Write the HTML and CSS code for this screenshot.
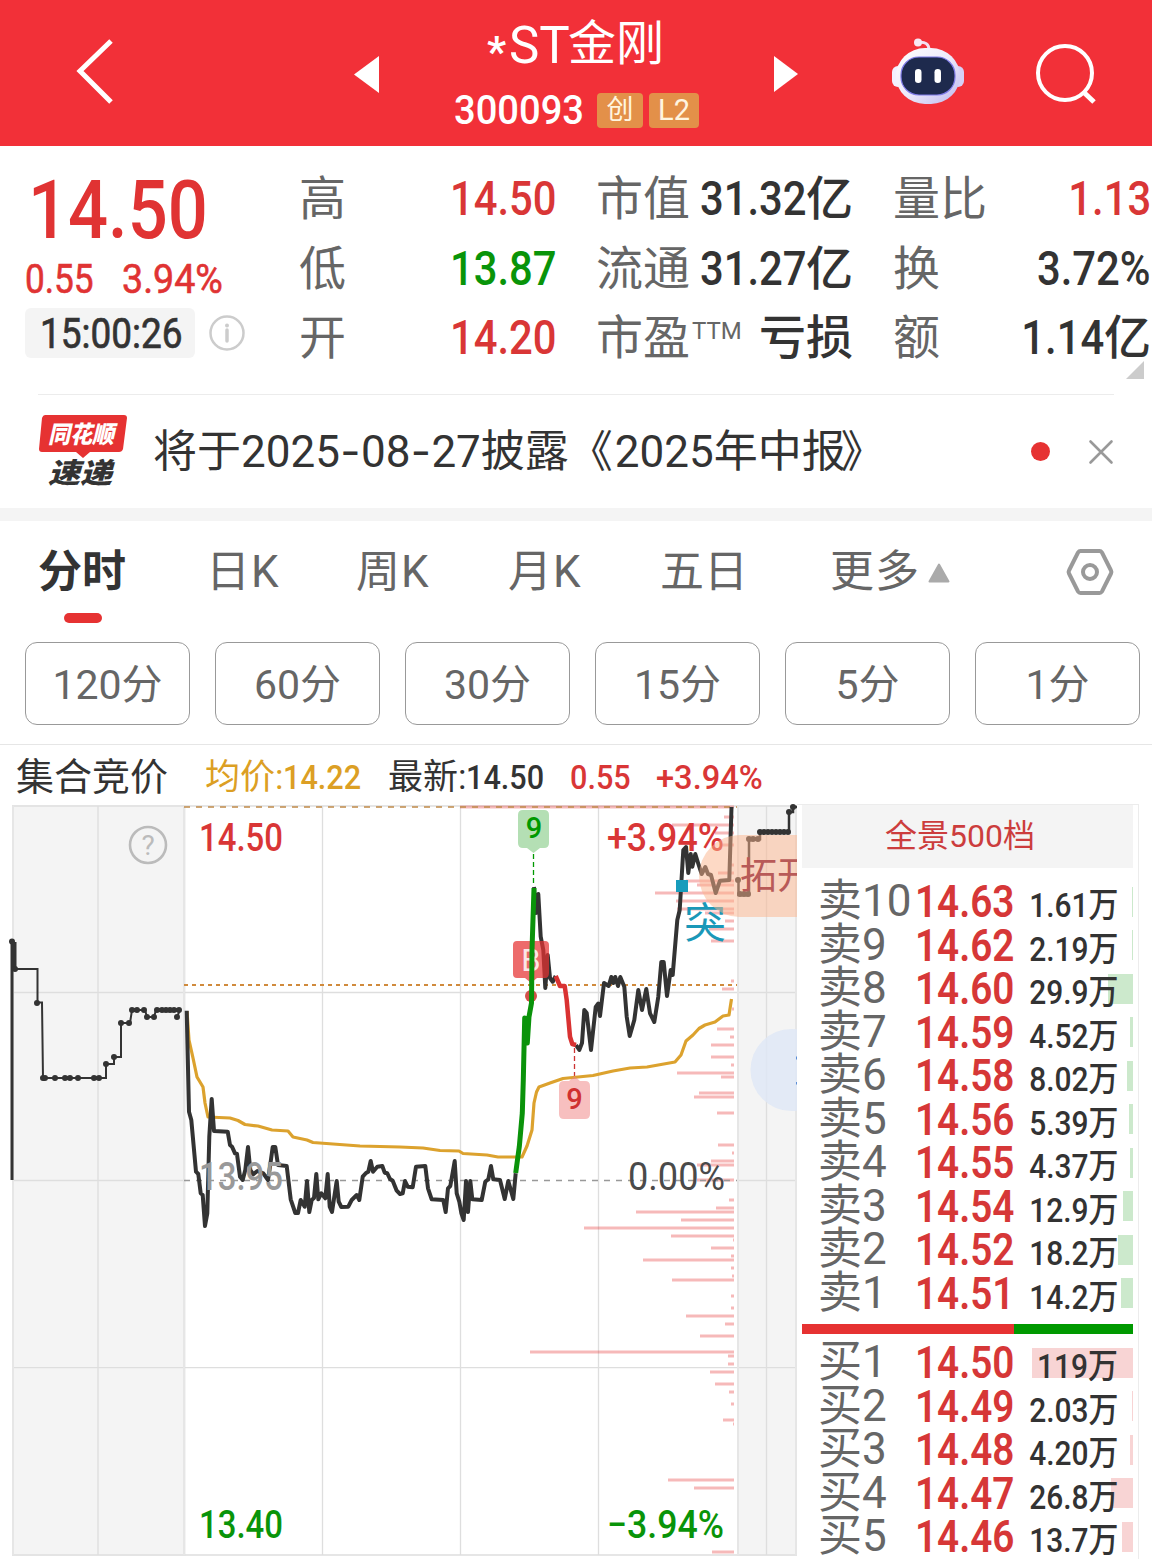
FILE: index.html
```html
<!DOCTYPE html>
<html lang="zh-CN">
  <head>
    <meta charset="UTF-8" />
    <meta name="viewport" content="width=device-width, initial-scale=1.0" />
    <title>*ST金刚 300093</title>
    <link rel="stylesheet" href="styles.css">
  </head>
  <body>
    <div class="header">
      <svg class="back" width="44" height="72" viewBox="0 0 44 72">
        <path d="M38 6 L7 36 L38 67" fill="none" stroke="#fff" stroke-width="5" />
      </svg>
      <svg class="prev" width="25" height="37" viewBox="0 0 25 37">
        <path d="M25 0 V37 L0 18.5 Z" fill="#fff" />
      </svg>
      <div class="title">
        <div class="name"><span class="star">*</span><span class="st">ST</span>金刚</div>
        <div class="code">
          <span class="num">300093</span>
          <span class="badge">创</span>
          <span class="badge badge-l2">L2</span>
        </div>
      </div>
      <svg class="next" width="24" height="36" viewBox="0 0 24 36">
        <path d="M0 0 V36 L24 18 Z" fill="#fff" />
      </svg>
      <svg class="robot" width="72" height="68" viewBox="0 0 72 68">
        <defs>
          <linearGradient id="shell" x1="0" y1="0" x2="1" y2="1">
            <stop offset="0" stop-color="#fff" />
            <stop offset="0.5" stop-color="#eeeafa" />
            <stop offset="1" stop-color="#bcb8ee" />
          </linearGradient>
        </defs>
        <path d="M26 4.500 Q37 3 37 12" fill="none" stroke="#f3dff0" stroke-width="3" />
        <circle cx="26" cy="4.500" r="4" fill="#f8e8f4" />
        <rect x="0" y="28" width="12" height="21" rx="6" fill="#f3f0ff" />
        <rect x="60" y="28" width="12" height="21" rx="6" fill="#d6d0f6" />
        <rect x="4" y="10" width="64" height="56" rx="29" fill="url(#shell)" />
        <rect x="9" y="19" width="54" height="38" rx="18" fill="#1e2a4d" stroke="#7f7be8" stroke-width="1.200" />
        <rect x="23" y="31" width="6.500" height="14" rx="3.200" fill="#fff" />
        <rect x="42.500" y="31" width="6.500" height="14" rx="3.200" fill="#fff" />
      </svg>
      <svg class="search" width="62" height="62" viewBox="0 0 62 62">
        <circle cx="30" cy="30" r="27" fill="none" stroke="#fff" stroke-width="4" />
        <path d="M48.500 49 L59 59" stroke="#fff" stroke-width="5" />
      </svg>
    </div>

    <div class="quote">
      <div class="price-box">
        <div class="price"><span class="num">14.50</span></div>
        <div class="change">
          <span class="num">0.55</span>
          <span class="num pct">3.94%</span>
        </div>
        <div class="time-row">
          <div class="time"><span class="num">15:00:26</span></div>
          <svg width="36" height="36" viewBox="0 0 36 36">
            <circle cx="18" cy="18" r="16.500" fill="none" stroke="#ccc" stroke-width="2.500" />
            <circle cx="18" cy="10.500" r="2" fill="#ccc" />
            <path d="M18 15 V26" stroke="#ccc" stroke-width="3.500" stroke-linecap="round" />
          </svg>
        </div>
      </div>
      <div class="stats">
        <div class="label">高</div>
        <div class="value red"><span class="num">14.50</span></div>
        <div class="label">市值</div>
        <div class="value"><span class="num">31.32</span>亿</div>
        <div class="label">量比</div>
        <div class="value red"><span class="num">1.13</span></div>

        <div class="label">低</div>
        <div class="value green"><span class="num">13.87</span></div>
        <div class="label">流通</div>
        <div class="value"><span class="num">31.27</span>亿</div>
        <div class="label">换</div>
        <div class="value"><span class="num">3.72%</span></div>

        <div class="label">开</div>
        <div class="value red"><span class="num">14.20</span></div>
        <div class="label">市盈<span class="ttm">TTM</span></div>
        <div class="value">亏损</div>
        <div class="label">额</div>
        <div class="value"><span class="num">1.14</span>亿</div>
      </div>
      <div class="corner"></div>
    </div>

    <div class="news">
      <svg class="news-logo" width="90" height="78" viewBox="38 411 90 78">
        <path d="M45 415 H124 Q127 415 127 418 L123 449 Q122 452 119 452 H90 L83 458 L76 452 H42 Q39 452 39 449 L42 418 Q43 415 45 415 Z" fill="#e63232" />
        <text x="48" y="443" class="logo-top" textLength="66" lengthAdjust="spacingAndGlyphs">同花顺</text>
        <text x="48" y="483" class="logo-bottom" textLength="64" lengthAdjust="spacingAndGlyphs">速递</text>
      </svg>
      <div class="news-text">将于2025<span class="dash">-</span>08<span class="dash">-</span>27披露<span class="quote-open">《</span>2025年中报<span class="quote-close">》</span></div>
      <span class="dot"></span>
      <svg class="close" width="26" height="26" viewBox="0 0 26 26">
        <path d="M2.500 2.500 L23.500 23.500 M23.500 2.500 L2.500 23.500" stroke="#999" stroke-width="2.600" stroke-linecap="round" />
      </svg>
    </div>

    <div class="tabs">
      <div class="tab active">分时</div>
      <div class="tab">日K</div>
      <div class="tab">周K</div>
      <div class="tab">月K</div>
      <div class="tab">五日</div>
      <div class="tab more">更多
        <svg width="22" height="20" viewBox="0 0 22 20">
          <path d="M11 1.500 L20.500 18.500 H1.500 Z" fill="#aaa" stroke="#aaa" stroke-width="2" stroke-linejoin="round" />
        </svg>
      </div>
      <svg class="setting" width="50" height="50" viewBox="0 0 50 50">
        <path d="M15.500 4 H34.500 Q36 4 37 5.500 L46 23.500 Q46.800 25 46 26.500 L37 44.500 Q36 46 34.500 46 H15.500 Q14 46 13 44.500 L4 26.500 Q3.200 25 4 23.500 L13 5.500 Q14 4 15.500 4 Z" fill="none" stroke="#999" stroke-width="4" />
        <circle cx="25" cy="25" r="7" fill="none" stroke="#999" stroke-width="4" />
      </svg>
    </div>

    <div class="periods">
      <button>120分</button>
      <button>60分</button>
      <button>30分</button>
      <button>15分</button>
      <button>5分</button>
      <button>1分</button>
    </div>

    <div class="info">
      <span class="info-name">集合竞价</span>
      <span class="info-avg">均价:<span class="num">14.22</span></span>
      <span class="info-last">最新:<span class="num">14.50</span></span>
      <span class="info-diff red"><span class="num">0.55</span></span>
      <span class="info-pct red"><span class="num">+3.94%</span></span>
    </div>

    <div class="main">
      <svg class="chart" width="797" height="759" viewBox="0 800 797 759">
        <!-- auction areas -->
        <rect x="12" y="805" width="174" height="751" fill="#f4f4f4" />
        <rect x="737" y="805" width="60" height="751" fill="#f4f4f4" />

        <!-- grid -->
        <g stroke="#dedede" stroke-width="1.300">
          <path d="M12 806 H797 M12 992.500 H797 M12 1180.500 H186 M737 1180.500 H797 M12 1367.700 H797 M12 1555 H797" />
          <path d="M98 806 V1555 M322.500 806 V1555 M460.500 806 V1555 M598.500 806 V1555 M766.500 806 V1555" />
        </g>
        <g stroke="#e6e6e6" stroke-width="2">
          <path d="M13 806 V1555 M184 806 V1555 M738 806 V1555 M796 806 V1555" />
        </g>

        <!-- price distribution -->
        <path stroke="#e63232" stroke-opacity="0.340" stroke-width="3" fill="none" d="
          M460 807 H734 M724 817 H734 M672 825 H734 M715 833 H734 M722 845 H734 M731 865 H734
          M718 873 H734 M686 881 H734 M697 885 H734 M655 893 H734 M676 901 H734 M677 909 H734
          M705 913 H734 M725 921 H734 M709 929 H734 M711 941 H734 M731 981 H734 M722 989 H734
          M732 1009 H734 M717 1029 H734 M730 1037 H734 M711 1045 H734 M711 1057 H734 M731 1065 H734
          M677 1073 H734 M721 1077 H734 M699 1093 H734 M694 1097 H734 M717 1113 H734 M718 1145 H734
          M732 1153 H734 M711 1161 H734 M697 1165 H734 M697 1180 H734 M729 1200 H734 M716 1208 H734
          M636 1212 H734 M681 1220 H734 M584 1228 H734 M671 1236 H734 M733 1240 H734 M711 1248 H734
          M731 1256 H734 M643 1260 H734 M731 1268 H734 M732 1276 H734 M672 1280 H734 M731 1296 H734
          M731 1308 H734 M686 1316 H734 M725 1324 H734 M700 1336 H734 M530 1352 H734 M728 1356 H734
          M728 1364 H734 M710 1372 H734 M715 1384 H734 M729 1392 H734 M731 1404 H734 M723 1420 H734
          M733 1424 H734 M668 1480 H734 M694 1488 H734 M712 1552 H734" />

        <path d="M184 807 H737" stroke="#c08a4a" stroke-width="1.600" stroke-dasharray="6 6" />
        <path d="M184 985 H737" stroke="#d08a3c" stroke-width="2" stroke-dasharray="4 4" />
        <path d="M184 1180.500 H737" stroke="#999" stroke-width="1.600" stroke-dasharray="6 6" />

        <text x="199" y="851" class="axis red" textLength="84" lengthAdjust="spacingAndGlyphs">14.50</text>
        <text x="607" y="851" class="axis red" textLength="117" lengthAdjust="spacingAndGlyphs">+3.94%</text>
        <text x="628" y="1190" class="axis dark" textLength="97" lengthAdjust="spacingAndGlyphs">0.00%</text>
        <text x="199" y="1538" class="axis green" textLength="84" lengthAdjust="spacingAndGlyphs">13.40</text>
        <text x="607" y="1538" class="axis green" textLength="117" lengthAdjust="spacingAndGlyphs">−3.94%</text>

        <circle cx="148" cy="845" r="18" fill="none" stroke="#bbb" stroke-width="2.600" />
        <text x="148" y="855" class="help">?</text>

        <!-- opening auction -->
        <g fill="none" stroke="#333" stroke-width="2">
          <path d="M12 942 V1180" stroke-width="3" />
          <path d="M14 942 V969" stroke-width="5" />
          <path d="M14 969 H37.500 V1002.500 H42 L43 1078 H106 V1064 H114 V1057 H121 V1023 H130 L132 1010 H145 L147 1017 H154 L156 1010 H180 L177 1017" />
        </g>
        <path class="dots" d="M12 941.500h0M15 969h0M37 1003h0M43 1078h0M45 1078h0M55 1078h0M65 1078h0M70 1078h0M78 1078h0M94 1078h0M99 1078h0M106 1064h0M114 1057h0M121 1023h0M129 1023h0M132 1010h0M137 1010h0M144 1010h0M147 1017h0M154 1017h0M157 1010h0M162 1010h0M166 1010h0M170 1010h0M174 1010h0M179 1010h0M177 1017h0" />

        <!-- markers -->
        <path d="M523 810 H544 Q549 810 549 815 V843 Q549 848 544 848 H540 L533.500 853 L527 848 H523 Q518 848 518 843 V815 Q518 810 523 810 Z" fill="#b4dfb4" />
        <text x="534" y="838" class="mark" fill="#090">9</text>
        <path d="M533.500 854 V886" stroke="#090" stroke-width="1.300" stroke-dasharray="5 3" />
        <path d="M574.500 1048 V1076" stroke="#c33" stroke-width="1.300" stroke-dasharray="5 3" />

        <!-- average -->
        <polyline class="avg" points="187,1011 189,1040 193,1058 197,1077 203,1087 205,1103 208,1117 230,1118 238,1120.500 245,1124.500 258,1126 272,1130 288,1131 293,1137 307,1140 313,1142.500 333,1144 360,1146 400,1147 423,1148 440,1150.500 459,1151 463,1153.500 487,1155 498,1157 522,1157 527,1146 532,1130 534,1103 536.500,1092 539,1087 550,1083 563,1078.500 593,1075.500 613,1071 630,1068 647,1067 675,1062 681,1055 686,1041 693,1035 699,1028.500 705,1025 715,1022 723,1016 729,1015 731.500,999" />

        <!-- price -->
        <polyline class="line" points="186.700,1010.700 189,1111.700 191.300,1120 196,1171.700 198.300,1174 200.700,1193.300 202.700,1195 205,1226 207.300,1213.300 209.300,1136.700 211.700,1099 214,1131 227.700,1131.700 230,1145 232,1146.700 235,1153.300 237,1154 240,1176.700 242.700,1180 245.300,1170 248,1147 250.300,1170 253.300,1174.300 257.300,1171 263.300,1173.300 268,1180 270,1166.700 272.700,1147 275.300,1147 278,1165 286.700,1166 290.700,1199.300 295.300,1213 298,1213 300.700,1200 304.700,1206.700 307,1181 309.300,1212 311.700,1200 314,1198 316.300,1174 318.300,1199.300 321.300,1193.300 325.300,1198.300 327.700,1174 329.700,1206.700 332,1212 336.700,1181 338.700,1201.700 341.300,1207 348.300,1206.700 351.700,1200 356.700,1195 359.300,1200 362.700,1176.700 366,1173 368.300,1171.700 370.700,1161 373,1171.700 377.300,1166.700 382.300,1166 384.700,1172.700 387.300,1173.300 390,1179 392.700,1180.700 396.700,1190.700 400,1194 402.700,1193.300 405,1181 407.700,1186.700 412.700,1187.300 416,1166.700 425.300,1166 428,1188.300 431.700,1199.300 443.300,1200 445.700,1212 448,1188.300 450.300,1186 454.700,1161 456.700,1193.300 459.300,1201.700 461.300,1213 463.700,1220 466,1181 468,1212 470.300,1181 472.300,1199.300 481.700,1200 485.300,1181.700 488.300,1179.300 491,1166 493.300,1179.300 500,1180 504.700,1199 508.300,1181 513.300,1199 515.700,1173.300" />
        <polyline class="line" points="534,887 536,913 538.300,894 540.700,936.700 543.300,950 545.300,988 547.700,955 550,978 552.700,981.700 555.700,976" />
        <polyline class="line" points="576,1045 579.300,1050 582,1043 584.300,1010 586.700,1013 591,1050 595.700,1007 598.300,1003.500 600,1016 604,983 608.700,986 611.300,977 613.300,983 615.300,977 618,986 620.300,977 624.300,986.700 626.700,1016.700 629.700,1036 634.300,1020 638.300,990 642,1010 646.300,989 650,1013.300 654.300,1022 658.300,996.700 661.300,962 663.700,962 667,996 670.700,970 672.700,975 677.300,920 679.700,910 683.300,850 686,847 688.300,873 690.700,854 692.300,866.700 695.300,854 698.700,865 701.700,874 705.300,867 708,874 711,875 715.700,893 720,880.700 729.300,880 731.500,807" />
        <polyline class="line line-red" points="555.700,976 560,986 564.700,986 566.700,1000 570,1036.700 572.300,1044 576,1045" />

        <path d="M517 941 H545 Q549 941 549 945 V973 Q549 978 545 978 H537 L531 983 L525 978 H517 Q513 978 513 974 V945 Q513 941 517 941 Z" fill="#e63232" fill-opacity="0.720" />
        <text x="531" y="971" class="mark-b">B</text>
        <circle cx="531" cy="996" r="6" fill="#d3504a" />
        <polyline class="line line-green" points="515.700,1173 519.300,1146.700 522.300,1113 523.300,1080 524.700,1018 527.300,1043 529,1016.700 531.500,1003 532,950 534,888" />

        <path d="M564 1081 H569 L574.500 1076 L580 1081 H585 Q590 1081 590 1086 V1114 Q590 1119 585 1119 H564 Q559 1119 559 1114 V1086 Q559 1081 564 1081 Z" fill="#ef8080" fill-opacity="0.500" />
        <text x="574.500" y="1109" class="mark" fill="#d03030">9</text>

        <rect x="676" y="880" width="12" height="12" fill="#179cbc" />
        <text x="684" y="938" class="breakout">突</text>

        <!-- closing auction -->
        <path d="M738.500 878 V895 H749 V839 H760 V832 H789 V812 H793 V807 H797" fill="none" stroke="#333" stroke-width="2.500" />
        <path class="dots" d="M738 880h0M740 894h0M744 894h0M748 894h0M749 839h0M753 839h0M758 839h0M760 832h0M764 832h0M768 832h0M772 832h0M776 832h0M780 832h0M784 832h0M788 832h0M789 812h0M793 807h0" />

        <!-- floating entries, cut by the panel edge -->
        <path d="M797 835 H740 A41 41 0 0 0 740 917 H797 Z" fill="#fcb48c" fill-opacity="0.500" />
        <text x="740" y="889" class="float-text">拓开</text>
        <circle cx="791.500" cy="1070" r="41" fill="#dfe8f6" fill-opacity="0.850" />
        <path d="M796.500 1056.500 V1059.500 M796.500 1082 V1084.500" stroke="#5b8ed8" stroke-width="1" />
        <text x="199" y="1190" class="axis gray" textLength="84" lengthAdjust="spacingAndGlyphs">13.95</text>
      </svg>

      <div class="book">
        <div class="book-title">全景500档</div>
        <div class="rows sell">
          <div class="row" style="--w: 1px"><span>卖10</span><b><i class="num">14.63</i></b><em>1.61万</em></div>
          <div class="row" style="--w: 1px"><span>卖9</span><b><i class="num">14.62</i></b><em>2.19万</em></div>
          <div class="row" style="--w: 25px"><span>卖8</span><b><i class="num">14.60</i></b><em>29.9万</em></div>
          <div class="row" style="--w: 3px"><span>卖7</span><b><i class="num">14.59</i></b><em>4.52万</em></div>
          <div class="row" style="--w: 6px"><span>卖6</span><b><i class="num">14.58</i></b><em>8.02万</em></div>
          <div class="row" style="--w: 4px"><span>卖5</span><b><i class="num">14.56</i></b><em>5.39万</em></div>
          <div class="row" style="--w: 3px"><span>卖4</span><b><i class="num">14.55</i></b><em>4.37万</em></div>
          <div class="row" style="--w: 10px"><span>卖3</span><b><i class="num">14.54</i></b><em>12.9万</em></div>
          <div class="row" style="--w: 15px"><span>卖2</span><b><i class="num">14.52</i></b><em>18.2万</em></div>
          <div class="row" style="--w: 12px"><span>卖1</span><b><i class="num">14.51</i></b><em>14.2万</em></div>
        </div>
        <div class="ratio"><div class="ratio-buy" style="width: 64%"></div></div>
        <div class="rows buy">
          <div class="row" style="--w: 101px"><span>买1</span><b><i class="num">14.50</i></b><em>119万</em></div>
          <div class="row" style="--w: 1px"><span>买2</span><b><i class="num">14.49</i></b><em>2.03万</em></div>
          <div class="row" style="--w: 3px"><span>买3</span><b><i class="num">14.48</i></b><em>4.20万</em></div>
          <div class="row" style="--w: 22px"><span>买4</span><b><i class="num">14.47</i></b><em>26.8万</em></div>
          <div class="row" style="--w: 11px"><span>买5</span><b><i class="num">14.46</i></b><em>13.7万</em></div>
        </div>
      </div>
    </div>
  </body>
</html>
```
FILE: styles.css
```css
* {
  box-sizing: border-box;
}

body {
  margin: 0;
  width: 1152px;
  height: 1559px;
  overflow: hidden;
  background-color: #fff;
  color: #333;
  font-family: Roboto, "Noto Sans CJK SC", sans-serif;
}

svg {
  display: block;
  flex: none;
}

.red {
  color: #d93636;
  fill: #d93636;
}

.green {
  color: #099409;
  fill: #099409;
}

/* condensed figures */
.num {
  display: inline-block;
  font-style: normal;
  font-weight: 500;
  transform: scaleX(0.88);
  transform-origin: left center;
  white-space: nowrap;
}

/* header */
.header {
  display: flex;
  align-items: flex-start;
  height: 146px;
  background-color: #f23038;
  color: #fff;
}

.back {
  margin: 35px 0 0 73px;
}

.prev {
  margin: 56px 0 0 237px;
}

.title {
  width: 245px;
  margin-left: 75px;
}

.name {
  display: flex;
  height: 90px;
  padding-left: 33px;
  font-size: 48px;
  line-height: 88px;
  white-space: nowrap;
}

.st {
  width: 59px;
  font-size: 51px;
  line-height: 91px;
}

.star {
  width: 22px;
  font-size: 42px;
  font-weight: 700;
  line-height: 104px;
}

.code {
  display: flex;
  align-items: center;
  height: 40px;
}

.code .num {
  width: 143px;
  font-size: 41px;
  transform: scaleX(0.93);
}

.badge {
  width: 46px;
  height: 35px;
  border-radius: 4px;
  background-color: #e39049;
  color: #fff5e0;
  font-size: 27px;
  line-height: 35px;
  text-align: center;
}

.badge-l2 {
  width: 50px;
  margin-left: 6px;
  font-size: 29px;
}

.next {
  margin: 56px 0 0 75px;
}

.robot {
  margin: 38px 0 0 94px;
}

.search {
  margin: 43px 0 0 71px;
}

/* quote */
.quote {
  position: relative;
  display: flex;
  height: 248px;
}

.price-box {
  width: 299px;
  padding: 19px 0 0 25px;
  color: #e03333;
}

.price {
  height: 90px;
  padding-left: 3px;
  font-size: 81px;
  line-height: 92px;
}

.price .num {
  transform: scaleX(0.87);
}

.change {
  display: flex;
  height: 46px;
  font-size: 40px;
  line-height: 49px;
}

.change .num {
  width: 97px;
  font-weight: 400;
  -webkit-text-stroke: 0.6px;
}

.change .pct {
  transform: scaleX(0.94);
}

.time-row {
  display: flex;
  align-items: center;
  gap: 14px;
  margin-top: 7px;
}

.time {
  width: 170px;
  height: 50px;
  padding-left: 15px;
  border-radius: 6px;
  background-color: #f4f4f4;
  color: #333;
  font-size: 42px;
  line-height: 51px;
}

.time .num {
  font-weight: 400;
  -webkit-text-stroke: 0.7px;
}

.stats {
  display: grid;
  grid-template-columns: 47px 210px 141px 156px 94px 204px;
  grid-template-rows: repeat(3, 69.500px);
  width: 853px;
  padding-top: 18px;
  font-size: 47px;
  line-height: 69px;
}

.stats .label {
  color: #666;
  white-space: nowrap;
}

.stats .label:nth-child(6n + 3) {
  margin-left: 40px;
}

.stats .label:nth-child(6n + 5) {
  margin-left: 40px;
}

.stats .value {
  justify-self: end;
  white-space: nowrap;
  font-weight: 500;
}

.stats .num {
  margin-left: -14px;
  font-size: 48px;
  transform: scaleX(0.87);
  transform-origin: right center;
}

.ttm {
  position: relative;
  top: -15px;
  margin-left: 2px;
  font-size: 24px;
}

.corner {
  position: absolute;
  right: 8px;
  bottom: 15px;
  border-left: 18px solid transparent;
  border-bottom: 18px solid #ccc;
}

/* news */
.news {
  display: flex;
  align-items: center;
  height: 114px;
  margin: 0 38px;
  border-top: 1px solid #ececec;
}

.news-logo {
  margin-top: -4px;
}

.news-logo text {
  font-family: "Noto Sans CJK SC", sans-serif;
  font-weight: 900;
  font-style: italic;
}

.logo-top {
  fill: #fff;
  font-size: 24px;
}

.logo-bottom {
  fill: #333;
  font-size: 28px;
}

.news-text {
  width: 865px;
  margin-left: 25px;
  font-size: 44px;
  line-height: 60px;
  white-space: nowrap;
}

.dash {
  display: inline-block;
  width: 21px;
  font-family: Inter, sans-serif;
  text-align: center;
}

.quote-open {
  margin-right: 2px;
}

.quote-close {
  margin-left: -5px;
}

.dot {
  width: 19px;
  height: 19px;
  margin-left: 13px;
  border-radius: 50%;
  background-color: #e63232;
}

.close {
  margin-left: 38px;
}

/* tabs */
.tabs {
  display: flex;
  height: 134px;
  padding-left: 38px;
  border-top: 13px solid #f4f4f4;
  border-bottom: 13px solid #fff;
  color: #666;
  font-size: 44px;
  line-height: 103px;
  white-space: nowrap;
}

.tab {
  width: 152px;
  letter-spacing: 1px;
}

.tab:nth-child(2) {
  width: 150px;
}

.tab.active {
  width: 168px;
  color: #333;
  font-weight: 700;
  letter-spacing: 0;
}

.tab.active::after {
  content: "";
  display: block;
  width: 38px;
  height: 10px;
  margin: -11px 0 0 26px;
  border-radius: 5px;
  background-color: #e63232;
}

.tab:nth-child(5) {
  width: 170px;
  letter-spacing: 0;
}

.tab.more {
  display: flex;
  align-items: center;
  gap: 8px;
  width: 235px;
  height: 103px;
}

.setting {
  margin-top: 26px;
}

/* periods */
.periods {
  display: flex;
  gap: 25px;
  height: 103px;
  padding-left: 25px;
  border-bottom: 1px solid #e6e6e6;
}

.periods button {
  flex: none;
  width: 165px;
  height: 83px;
  padding: 0 0 6px;
  border: 1px solid #999;
  border-radius: 12px;
  background-color: #fff;
  color: #666;
  font-family: inherit;
  font-size: 41px;
}

/* info */
.info {
  display: flex;
  height: 55px;
  padding-left: 16px;
  font-size: 35px;
  line-height: 64px;
  white-space: nowrap;
}

.info .num {
  font-size: 34px;
  transform: scaleX(0.9);
}

.info-name {
  width: 189px;
  font-size: 38px;
}

.info-avg {
  width: 183px;
  color: #dc9f24;
}

.info-last {
  width: 182px;
}

.info-diff {
  width: 86px;
}

.info .info-pct .num {
  transform: scaleX(0.96);
}

/* chart */
.main {
  display: flex;
  height: 759px;
}

.axis {
  font-size: 39px;
  font-weight: 500;
}

.axis.dark {
  fill: #4a4a4a;
  font-weight: 400;
}

.axis.gray {
  fill: #999;
}

.help {
  fill: #bbb;
  font-size: 28px;
  text-anchor: middle;
}

.line,
.avg {
  fill: none;
  stroke: #333;
  stroke-width: 4;
  stroke-linejoin: round;
}

.avg {
  stroke: #dca22e;
  stroke-width: 3.200;
}

.line-red {
  stroke: #d93232;
  stroke-width: 4.500;
}

.line-green {
  stroke: #0a930a;
  stroke-width: 5;
}

.dots {
  fill: none;
  stroke: #333;
  stroke-width: 6;
  stroke-linecap: round;
}

.mark {
  font-size: 29px;
  font-weight: 500;
  text-anchor: middle;
}

.mark-b {
  fill: #fff;
  fill-opacity: 0.850;
  font-size: 31px;
  text-anchor: middle;
}

.breakout {
  fill: #1a98b8;
  font-size: 42px;
}

.float-text {
  fill: #b85a58;
  font-size: 37px;
}

/* order book */
.book {
  width: 342px;
  margin-top: 4px;
  padding: 0 5px;
  border-top: 1px solid #ececec;
  border-right: 1px solid #ececec;
}

.book-title {
  height: 63px;
  background-color: #f4f4f4;
  color: #cc3d3d;
  font-size: 32px;
  line-height: 63px;
  text-align: center;
  padding-right: 15px;
}

.rows.sell {
  padding-top: 12px;
}

.row {
  display: grid;
  grid-template-columns: 97px 111px 92px;
  padding: 0 0 0 16px;
  height: 43.500px;
  line-height: 43px;
  white-space: nowrap;
  background: linear-gradient(#cce9cc, #cce9cc) right center / var(--w) 30px no-repeat;
}

.buy .row {
  background-image: linear-gradient(#f8d4d4, #f8d4d4);
}

.row span {
  color: #666;
  font-size: 44px;
}

.row b {
  color: #d63737;
  font-size: 45px;
}

.row b .num {
  font-weight: 600;
  transform: scaleX(0.86);
}

.row em {
  justify-self: end;
  font-size: 34px;
  font-style: normal;
  font-weight: 500;
  line-height: 50px;
  transform: scaleX(0.88);
  transform-origin: right center;
}

.ratio {
  height: 10px;
  margin: 9px 0 7px;
  background-color: #090;
}

.ratio-buy {
  height: 10px;
  background-color: #e63232;
}
```
